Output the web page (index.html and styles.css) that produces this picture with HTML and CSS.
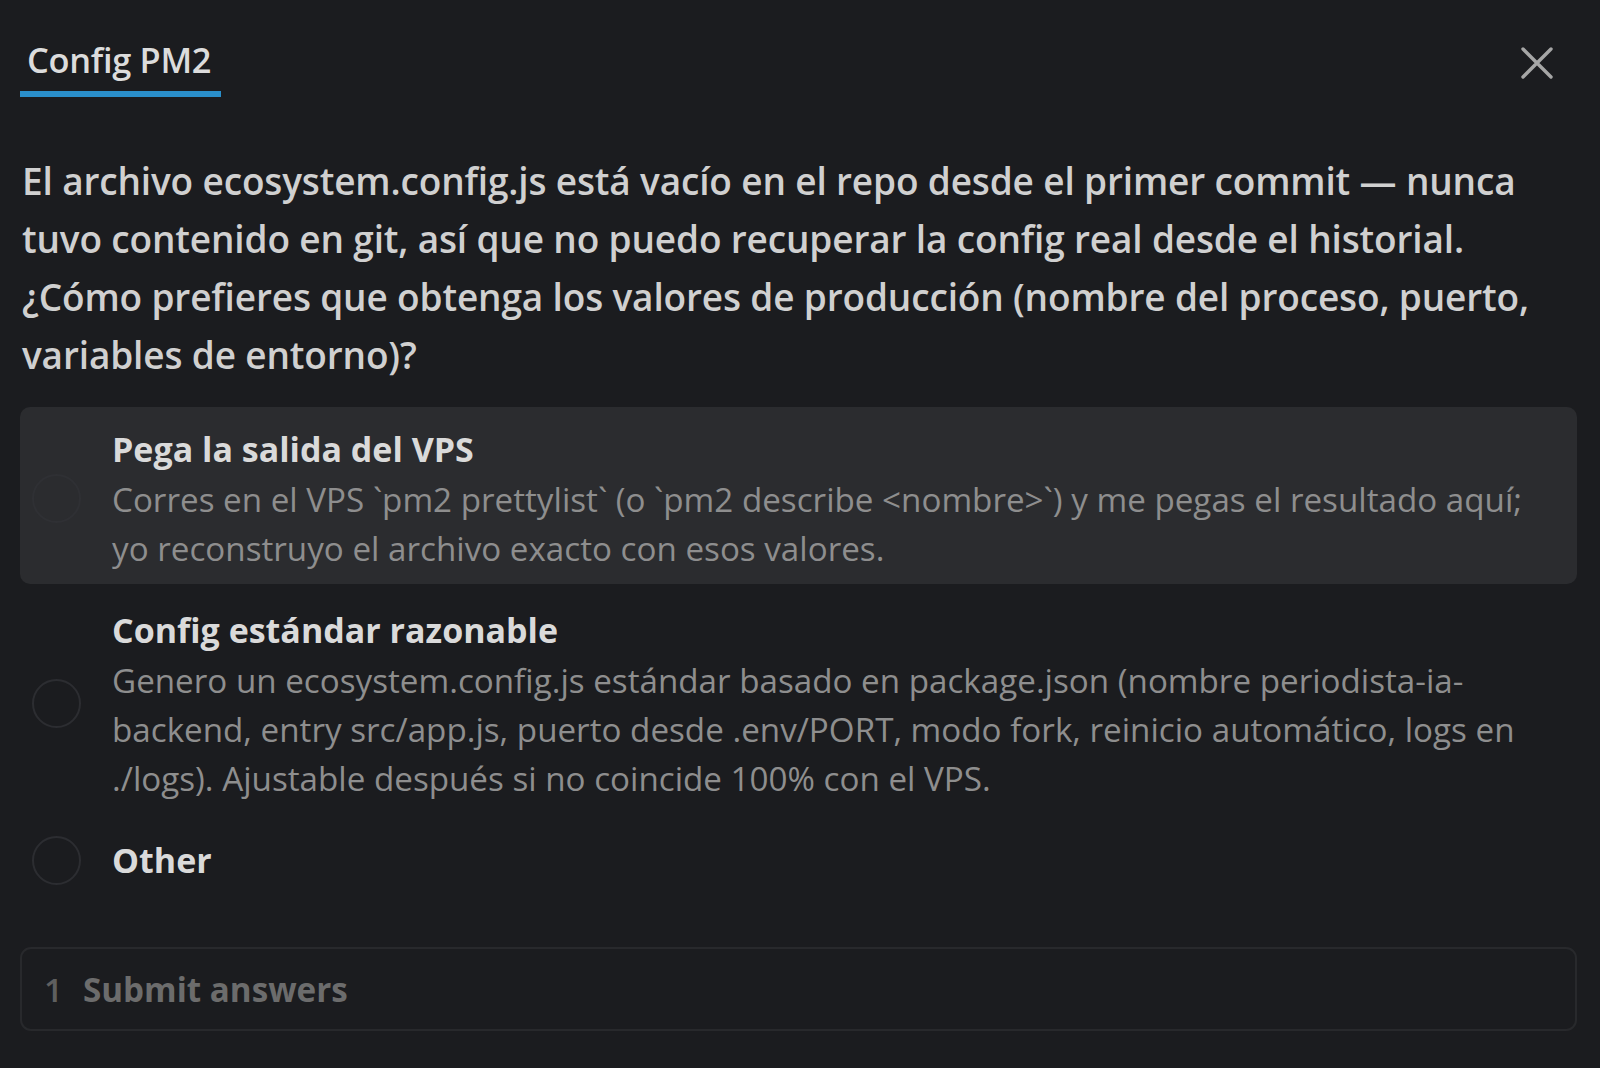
FILE: index.html
```html
<!DOCTYPE html>
<html>
	<head>
		<meta charset="utf-8" />
		<title>Config PM2</title>
		<link rel="stylesheet" href="styles.css">
	</head>
	<body>
		<div class="dialog">
			<div class="head">
				<div class="tab">Config PM2</div>
				<span class="close">
					<svg width="32" height="32" viewBox="0 0 32 32"><path d="M2 2L30 30M30 2L2 30" /></svg>
				</span>
			</div>
			<p class="question">El archivo ecosystem.config.js está vacío en el repo desde el primer commit — nunca tuvo contenido en git, así que no puedo recuperar la config real desde el historial. ¿Cómo prefieres que obtenga los valores de producción (nombre del proceso, puerto, variables de entorno)?</p>
			<div class="options">
				<div class="option active">
					<span class="radio"></span>
					<div class="text">
						<div class="title">Pega la salida del VPS</div>
						<div class="desc">Corres en el VPS `pm2 prettylist` (o `pm2 describe &lt;nombre&gt;`) y me pegas el resultado aquí; yo reconstruyo el archivo exacto con esos valores.</div>
					</div>
				</div>
				<div class="option">
					<span class="radio"></span>
					<div class="text">
						<div class="title">Config estándar razonable</div>
						<div class="desc">Genero un ecosystem.config.js estándar basado en package.json (nombre periodista-ia-backend, entry src/app.js, puerto desde .env/PORT, modo fork, reinicio automático, logs en ./logs). Ajustable después si no coincide 100% con el VPS.</div>
					</div>
				</div>
				<div class="option">
					<span class="radio"></span>
					<div class="text">
						<div class="title">Other</div>
					</div>
				</div>
			</div>
			<div class="submit"><span class="num">1</span><span>Submit answers</span></div>
		</div>
	</body>
</html>
```

FILE: styles.css
```css
*{
	margin: 0;
	padding: 0;
	box-sizing: border-box;
}
html,body{
	height: 100%;
}
body{
	background: #1b1c1f;
	font-family: "Open Sans", "Noto Sans", sans-serif;
	color: #d2d2d2;
	overflow: hidden;
}
.dialog{
	height: 100%;
	padding: 0 23px 0 20px;
}
.head{
	display: flex;
	justify-content: space-between;
	align-items: flex-start;
	height: 130px;
	padding-top: 35px;
}
.tab{
	font-size: 34.4px;
	font-weight: 600;
	line-height: 50px;
	padding: 0 10px 6px 7px;
	border-bottom: 6px solid #2a8fcb;
	color: #dcdcdc;
	letter-spacing: -0.3px;
}
.close{
	display: block;
	width: 32px;
	height: 32px;
	margin: 12px 24px 0 0;
}
.close svg path{
	stroke: #a6a6a6;
	stroke-width: 3.4;
	stroke-linecap: round;
	fill: none;
}
.question{
	font-size: 37px;
	font-weight: 600;
	line-height: 58px;
	padding: 22px 20px 0 2px;
	letter-spacing: -0.15px;
	color: #d0d0d0;
}
.options{
	display: flex;
	flex-direction: column;
	gap: 4px;
	margin-top: 23px;
}
.option{
	display: flex;
	align-items: center;
	padding: 16px 30px 11px 12px;
	border-radius: 10px;
}
.option.active{
	background: #2b2c2f;
}
.radio{
	flex: none;
	width: 49px;
	height: 49px;
	border: 2px solid #2c2d31;
	border-radius: 50%;
	margin-right: 31px;
}
.option.active .radio{
	border-color: #2f3034;
}
.title{
	font-size: 34px;
	font-weight: 700;
	line-height: 52px;
	color: #dadada;
}
.desc{
	font-size: 33.2px;
	line-height: 49px;
	color: #8e8e8e;
}
.submit{
	display: flex;
	align-items: center;
	height: 84px;
	margin-top: 50px;
	padding-left: 22px;
	border: 2px solid #28292c;
	border-radius: 11px;
	font-size: 33.2px;
	font-weight: 700;
	color: #6c6c6c;
}
.submit .num{
	margin-right: 20px;
	font-weight: 600;
	color: #5f5f5f;
}
```
